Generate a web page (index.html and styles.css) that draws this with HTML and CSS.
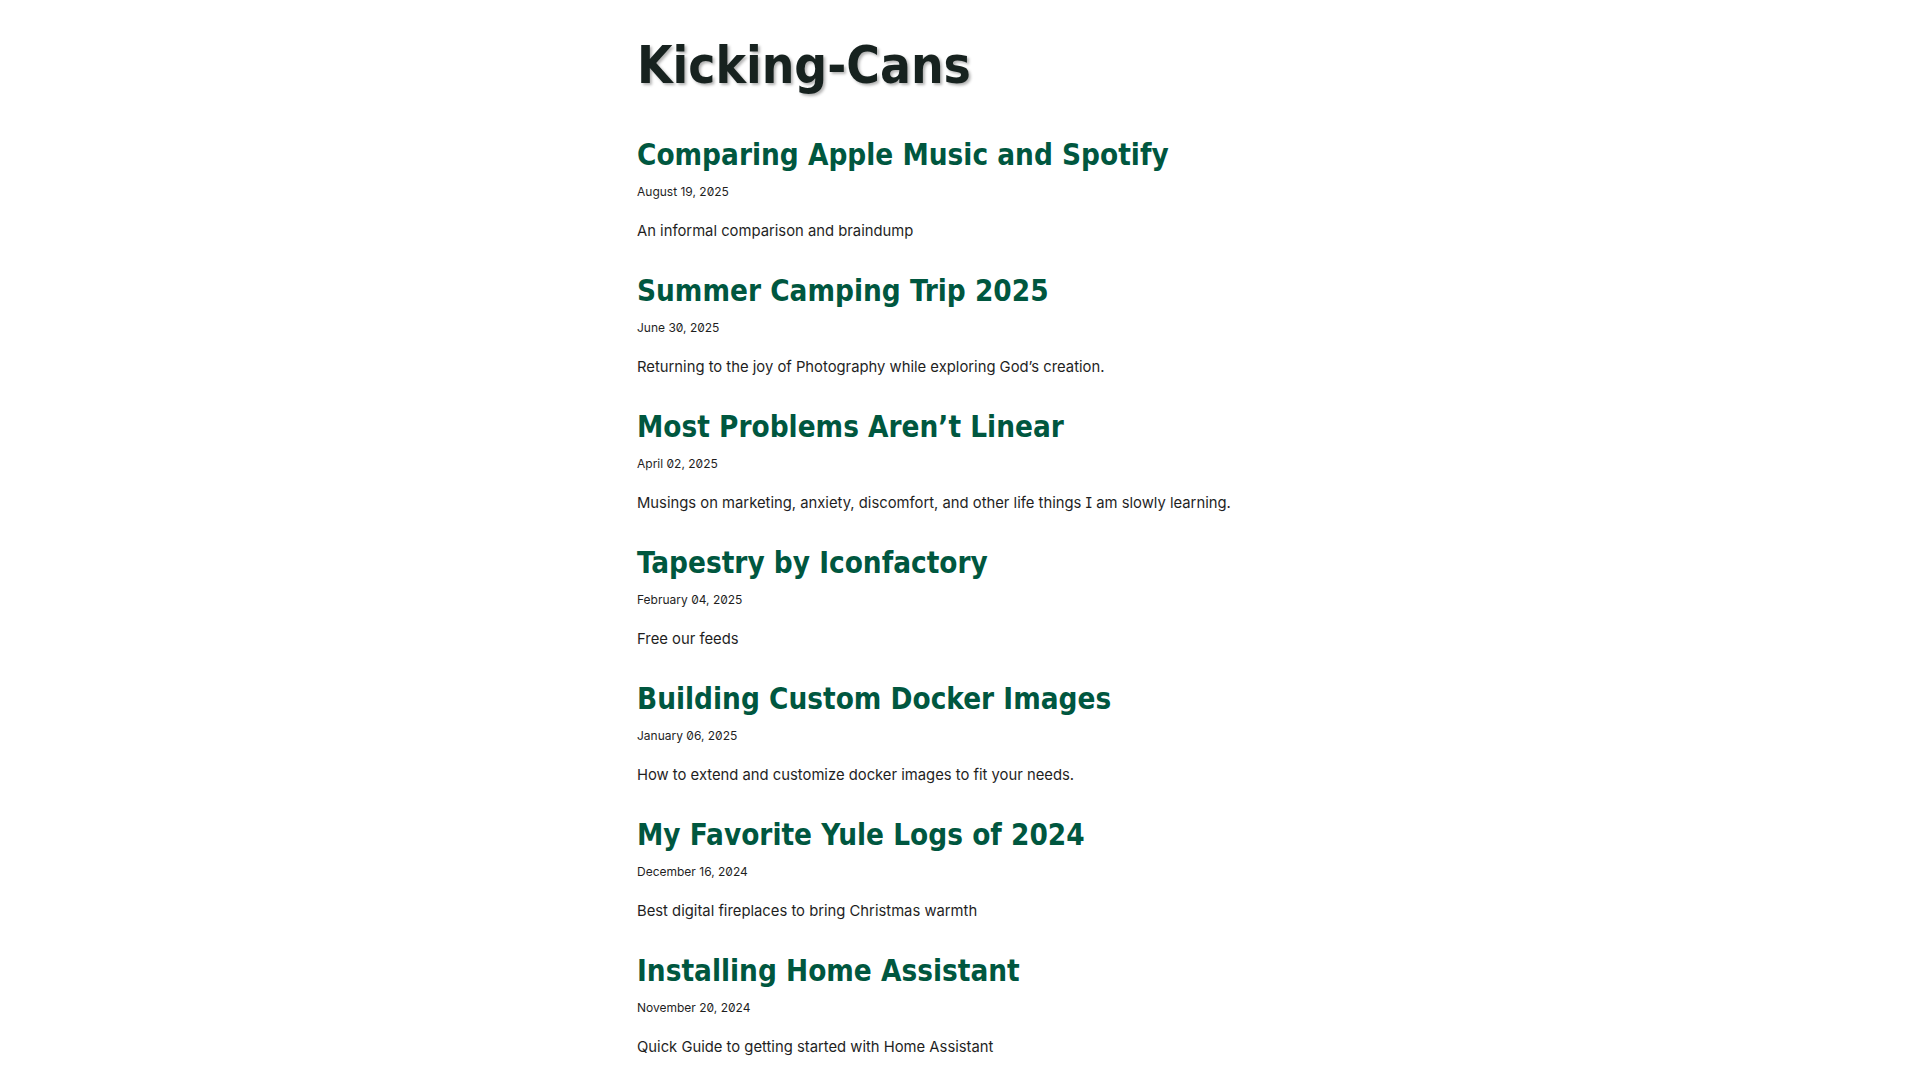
FILE: index.html
```html
<!DOCTYPE html>
<html lang="en">
<head>
<meta charset="utf-8">
<title>Kicking-Cans</title>
<link rel="stylesheet" href="styles.css">
</head>
<body>
<main class="page">
  <header class="site-header">
    <h1 class="site-title">Kicking-Cans</h1>
  </header>
  <section class="posts">
    <article class="post">
      <h2 class="post-title"><a href="#">Comparing Apple Music and Spotify</a></h2>
      <p class="post-date">August 19, 2025</p>
      <p class="post-summary">An informal comparison and braindump</p>
    </article>
    <article class="post">
      <h2 class="post-title"><a href="#">Summer Camping Trip 2025</a></h2>
      <p class="post-date">June 30, 2025</p>
      <p class="post-summary">Returning to the joy of Photography while exploring God’s creation.</p>
    </article>
    <article class="post">
      <h2 class="post-title"><a href="#">Most Problems Aren’t Linear</a></h2>
      <p class="post-date">April 02, 2025</p>
      <p class="post-summary">Musings on marketing, anxiety, discomfort, and other life things I am slowly learning.</p>
    </article>
    <article class="post">
      <h2 class="post-title"><a href="#">Tapestry by Iconfactory</a></h2>
      <p class="post-date">February 04, 2025</p>
      <p class="post-summary">Free our feeds</p>
    </article>
    <article class="post">
      <h2 class="post-title"><a href="#">Building Custom Docker Images</a></h2>
      <p class="post-date">January 06, 2025</p>
      <p class="post-summary">How to extend and customize docker images to fit your needs.</p>
    </article>
    <article class="post">
      <h2 class="post-title"><a href="#">My Favorite Yule Logs of 2024</a></h2>
      <p class="post-date">December 16, 2024</p>
      <p class="post-summary">Best digital fireplaces to bring Christmas warmth</p>
    </article>
    <article class="post">
      <h2 class="post-title"><a href="#">Installing Home Assistant</a></h2>
      <p class="post-date">November 20, 2024</p>
      <p class="post-summary">Quick Guide to getting started with Home Assistant</p>
    </article>
  </section>
</main>
</body>
</html>
```

FILE: styles.css
```css
html, body {
  margin: 0;
  padding: 0;
  background: #ffffff;
}

body {
  font-family: Inter, "Noto Sans", "Liberation Sans", sans-serif;
  font-feature-settings: "zero" 1, "cv08" 1;
  color: #1f1f1f;
}

.page {
  max-width: 646px;
  margin: 0 auto;
  padding: 35px 0 40px;
}

.site-title {
  margin: 0;
  font-family: "DejaVu Sans Condensed", "DejaVu Sans", sans-serif;
  font-stretch: condensed;
  font-weight: 700;
  font-size: 51px;
  line-height: 61px;
  color: #17221f;
  text-shadow: 2px 2px 3px rgba(0, 0, 0, 0.3);
}

.posts {
  display: flex;
  flex-direction: column;
  gap: 30px;
  margin-top: 41px;
}

.post-title {
  margin: 0;
  font-family: "DejaVu Sans Condensed", "DejaVu Sans", sans-serif;
  font-stretch: condensed;
  font-weight: 700;
  font-size: 29.4px;
  line-height: 36px;
}

.post-title a {
  color: #00573f;
  text-decoration: none;
}

.post-date {
  margin: 9.6px 0 0;
  font-size: 12px;
  line-height: 18px;
  color: #1f1f1f;
}

.post-summary {
  margin: 18.4px 0 0;
  font-size: 14.8px;
  line-height: 24px;
  color: #1f1f1f;
}
```
